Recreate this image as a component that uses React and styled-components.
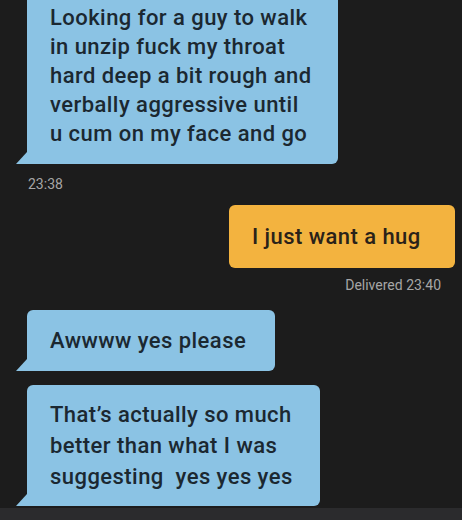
import React from "react";
import styled, { createGlobalStyle } from "styled-components";

const Global = createGlobalStyle`
  html, body { margin: 0; padding: 0; background: #1c1c1c; }
  body { width: 462px; height: 520px; overflow: hidden; font-family: Roboto, "Liberation Sans", sans-serif; }
`;

const Screen = styled.div`
  width: 462px;
  height: 520px;
  display: flex;
  flex-direction: column;
  background: #1c1c1c;
  overflow: hidden;
`;

const Thread = styled.div`
  flex: 1;
  display: flex;
  flex-direction: column;
  margin-top: -13px;
`;

const Row = styled.div`
  display: flex;
  justify-content: ${(p) => (p.$mine ? "flex-end" : "flex-start")};
  padding: ${(p) => (p.$mine ? "0 7px 0 0" : "0 0 0 27px")};
  margin-top: ${(p) => p.$gap || 0}px;
`;

const Bubble = styled.div`
  position: relative;
  box-sizing: border-box;
  width: ${(p) => p.$w}px;
  padding: ${(p) => p.$pad || 16}px 0 ${(p) => p.$pad || 16}px 23px;
  background: ${(p) => (p.$mine ? "#f3b33f" : "#8bc3e4")};
  color: ${(p) => (p.$mine ? "#2a2219" : "#1b2831")};
  border-radius: ${(p) => (p.$mine ? "6px" : "6px 6px 6px 0")};
  font-size: 22px;
  font-weight: 500;
  line-height: ${(p) => p.$lh || 29}px;
  letter-spacing: 0.45px;
  white-space: nowrap;

  &::before {
    content: "";
    display: ${(p) => (p.$mine ? "none" : "block")};
    position: absolute;
    left: -11px;
    bottom: 0;
    width: 0;
    height: 0;
    border-bottom: 12px solid #8bc3e4;
    border-left: 11px solid transparent;
  }
`;

const Line = styled.div``;

const Meta = styled.div`
  font-size: 14px;
  line-height: 16px;
  color: #a6a6a6;
  text-align: ${(p) => (p.$right ? "right" : "left")};
  padding: ${(p) => (p.$right ? "0 21px 0 0" : "0 0 0 28px")};
  margin-top: ${(p) => p.$gap || 0}px;
`;

const Footer = styled.div`
  height: 12px;
  background: #2b2b2d;
`;

export default function App() {
  return (
    <Screen>
      <Global />
      <Thread>
        <Row>
          <Bubble $w={311}>
            <Line>Looking for a guy to walk</Line>
            <Line>in unzip fuck my throat</Line>
            <Line>hard deep a bit rough and</Line>
            <Line>verbally aggressive until</Line>
            <Line>u cum on my face and go</Line>
          </Bubble>
        </Row>
        <Meta $gap={12}>23:38</Meta>
        <Row $mine $gap={13}>
          <Bubble $mine $w={226} $pad={17}>
            <Line>I just want a hug</Line>
          </Bubble>
        </Row>
        <Meta $right $gap={9}>Delivered 23:40</Meta>
        <Row $gap={17}>
          <Bubble $w={248}>
            <Line>Awwww yes please</Line>
          </Bubble>
        </Row>
        <Row $gap={14}>
          <Bubble $w={293} $lh={31} $pad={14}>
            <Line>That’s actually so much</Line>
            <Line>better than what I was</Line>
            <Line>suggesting&nbsp; yes yes yes</Line>
          </Bubble>
        </Row>
      </Thread>
      <Footer />
    </Screen>
  );
}
